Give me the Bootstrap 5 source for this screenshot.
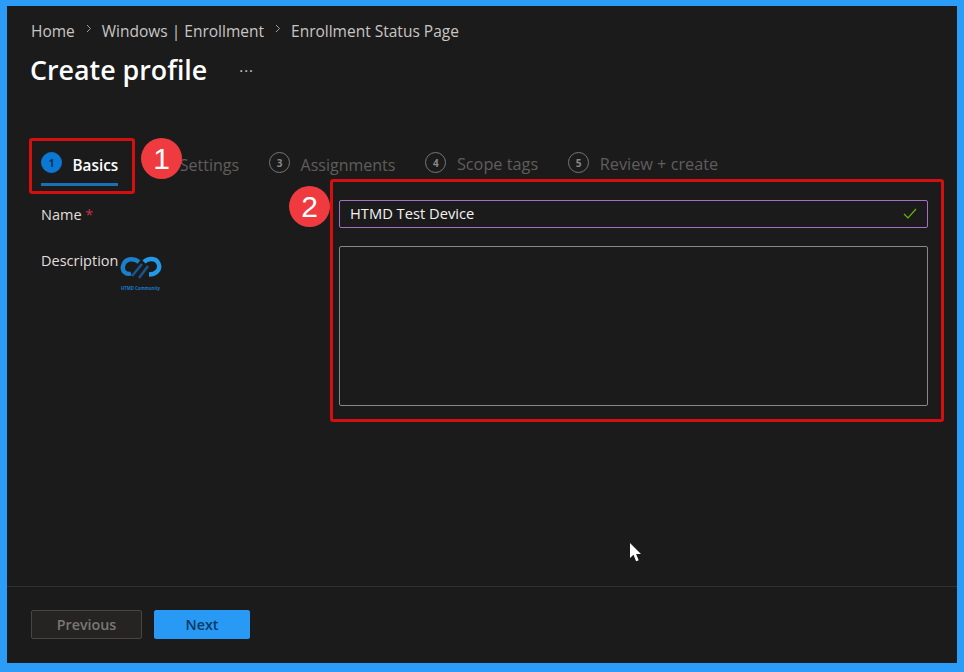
<!DOCTYPE html>
<html lang="en">
  <head>
    <meta charset="UTF-8" />
    <meta name="viewport" content="width=device-width, initial-scale=1.0" />
    <title>Create profile</title>
    <link
      href="https://cdn.jsdelivr.net/npm/bootstrap@5.3.0/dist/css/bootstrap.min.css"
      rel="stylesheet"
    />
    <style>
      html,
      body {
        height: 100%;
        margin: 0;
        overflow: hidden;
      }
      body {
        font-family: "Open Sans", "Noto Sans", sans-serif;
        background: #1b1b1b;
      }
      .frame {
        position: relative;
        height: 672px;
        border: solid #2b9cf8;
        border-width: 6px 7px 9px 7px;
        color: #e6e6e6;
      }
      .crumbs {
        padding: 15px 0 0 24px;
        font-size: 15.5px;
        line-height: 21px;
        color: #c8c6c4;
      }
      .crumbs svg {
        margin: 0 10px 6px 11px;
      }
      .page-title {
        font-size: 26.8px;
        font-weight: 600;
        line-height: 38px;
        margin: 0;
        color: #fff;
      }
      .title-row {
        padding: 9px 0 0 23px;
      }
      .dots {
        margin-left: 32px;
        font-size: 15px;
        line-height: 15px;
        letter-spacing: 1px;
        color: #c8c6c4;
      }
      .steps {
        margin-top: 60px;
        padding-left: 34px;
        gap: 30px;
      }
      .step {
        gap: 10.5px;
        height: 37px;
        padding-bottom: 6px;
        font-size: 16px;
        color: #605e5c;
      }
      .step:nth-child(n + 4) {
        font-size: 16.3px;
      }
      .step-on {
        color: #fff;
        font-size: 15.3px;
        font-weight: 600;
        border-bottom: 3px solid #1a6fb5;
        padding-bottom: 1px;
      }
      .step-num {
        width: 21px;
        height: 21px;
        border: 1.5px solid #797775;
        border-radius: 50%;
        font-size: 10px;
        font-weight: 700;
        line-height: 1;
        color: #8a8886;
        margin-bottom: 4px;
      }
      .step-on .step-num {
        background: #0b78d4;
        border-color: #0b78d4;
        color: #0c2f55;
        margin-bottom: 6px;
      }
      .form-area {
        padding: 14px 29px 0 34px;
      }
      .form-label-col {
        width: 298px;
        flex-shrink: 0;
        font-size: 14.5px;
        color: #e1dfdd;
        line-height: 20px;
        padding-top: 5px;
      }
      .name-row {
        margin-bottom: 18px;
      }
      .req {
        color: #c4314b;
      }
      .name-box {
        background: #1b1b1b;
        border: 1px solid #a66fc4;
        border-radius: 2px;
        height: 28px;
        padding: 0 10px 1px;
        font-size: 14.7px;
        color: #f3f2f1;
      }
      .desc-box {
        height: 160px;
        border: 1px solid #8a8886;
        border-radius: 2px;
        background: #1b1b1b;
      }
      .footer-bar {
        position: absolute;
        left: 0;
        right: 0;
        top: 580px;
        border-top: 1px solid #323130;
        padding: 23px 0 0 24px;
        gap: 12px;
      }
      .btn-prev,
      .btn-next {
        height: 29px;
        border-radius: 2px;
        padding: 0;
        font-size: 14.3px;
        font-weight: 600;
        line-height: 27px;
      }
      .btn-prev {
        width: 111px;
        background: #252423;
        border: 1px solid #484644;
        color: #797775;
      }
      .btn-next {
        width: 96px;
        background: #2899f5;
        border: 1px solid #2899f5;
        color: #0b3a63;
      }
      .callout-box {
        position: absolute;
        border: 3px solid #d40f0f;
        border-radius: 3px;
      }
      .callout-num {
        position: absolute;
        width: 41px;
        height: 41px;
        border-radius: 50%;
        background: #ef3b3f;
        color: #fff;
        font-family: "Liberation Sans", sans-serif;
        font-size: 30px;
        line-height: 41px;
        text-align: center;
      }
      .logo-mark {
        position: absolute;
        left: 113px;
        top: 250px;
        width: 42px;
        height: 36px;
        overflow: visible;
      }
      .pointer {
        position: absolute;
        left: 622px;
        top: 537px;
      }
    </style>
  </head>
  <body>
    <div class="frame">
      <!-- Breadcrumb -->
      <div class="crumbs d-flex align-items-center">
        <span>Home</span>
        <svg width="6" height="9" viewBox="0 0 6 9"><path d="M1 1l3.5 3.5L1 8" fill="none" stroke="#a19f9d" stroke-width="1" /></svg>
        <span>Windows | Enrollment</span>
        <svg width="6" height="9" viewBox="0 0 6 9"><path d="M1 1l3.5 3.5L1 8" fill="none" stroke="#a19f9d" stroke-width="1" /></svg>
        <span>Enrollment Status Page</span>
      </div>

      <div class="title-row d-flex align-items-center">
        <h1 class="page-title">Create profile</h1>
        <span class="dots">···</span>
      </div>

      <!-- Wizard steps -->
      <div class="steps d-flex">
        <div class="step step-on d-flex align-items-center">
          <span class="step-num d-flex align-items-center justify-content-center">1</span>
          <span>Basics</span>
        </div>
        <div class="step d-flex align-items-center">
          <!-- step 2's circle sits under callout 1, its digit never shows -->
          <span class="step-num d-flex align-items-center justify-content-center"></span>
          <span>Settings</span>
        </div>
        <div class="step d-flex align-items-center">
          <span class="step-num d-flex align-items-center justify-content-center">3</span>
          <span>Assignments</span>
        </div>
        <div class="step d-flex align-items-center">
          <span class="step-num d-flex align-items-center justify-content-center">4</span>
          <span>Scope tags</span>
        </div>
        <div class="step d-flex align-items-center">
          <span class="step-num d-flex align-items-center justify-content-center">5</span>
          <span>Review + create</span>
        </div>
      </div>

      <!-- Form -->
      <div class="form-area">
        <div class="name-row d-flex">
          <div class="form-label-col">Name <span class="req">*</span></div>
          <div class="name-box flex-grow-1 d-flex align-items-center justify-content-between">
            <span>HTMD Test Device</span>
            <svg width="14" height="11" viewBox="0 0 14 11"><path d="M1 6l4 4 8-9" fill="none" stroke="#6bb700" stroke-width="1.2" /></svg>
          </div>
        </div>
        <div class="d-flex">
          <div class="form-label-col">Description</div>
          <div class="desc-box flex-grow-1"></div>
        </div>
      </div>

      <div class="footer-bar d-flex">
        <button type="button" class="btn btn-prev">Previous</button>
        <button type="button" class="btn btn-next">Next</button>
      </div>

      <!-- Annotations on top of the screenshot -->
      <div class="callout-box" style="left: 22px; top: 132px; width: 106px; height: 56px"></div>
      <div class="callout-box" style="left: 323px; top: 173px; width: 614px; height: 243px"></div>
      <div class="callout-num" style="left: 134px; top: 132px">1</div>
      <div class="callout-num" style="left: 282px; top: 180px">2</div>

      <svg class="logo-mark" viewBox="0 0 42 36">
        <path d="M19 6C14 2 6 2 3.5 8.5S6 19 11 17.5" fill="none" stroke="#1c7fcc" stroke-width="4.4" />
        <path d="M24 6C28 2 36 1.5 38.5 7.5S36 18.5 29 18.5" fill="none" stroke="#2399ea" stroke-width="4.4" />
        <path d="M12 20l10-12M19 22l9-12" fill="none" stroke="#17558f" stroke-width="2.6" />
        <text x="1" y="34" font-size="4.6" font-weight="700" textLength="39" lengthAdjust="spacingAndGlyphs" fill="#1b78c4" font-family="Open Sans, sans-serif">HTMD Community</text>
      </svg>

      <svg class="pointer" width="14" height="21" viewBox="0 0 14 21">
        <path d="M1 0v15l3.5-3.2 2.6 6.5 2.6-1-2.6-6.3H12z" fill="#fff" />
      </svg>
    </div>

    <script src="https://cdn.jsdelivr.net/npm/bootstrap@5.3.0/dist/js/bootstrap.bundle.min.js"></script>
  </body>
</html>
